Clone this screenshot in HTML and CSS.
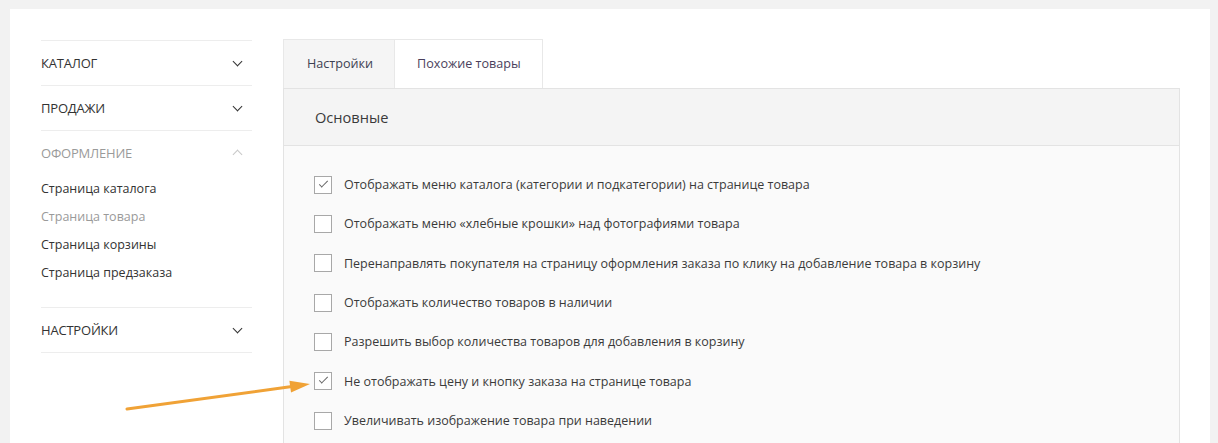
FILE: index.html
```html
<!DOCTYPE html>
<html lang="ru">
	<head>
		<meta charset="UTF-8" />
		<title>Оформление — Страница товара</title>
		<link rel="stylesheet" href="styles.css">
	</head>
	<body>
		<div class="page-card">
			<!-- Sidebar menu -->
			<nav class="side-menu">
				<div class="menu-section">
					<div class="menu-title">КАТАЛОГ <span class="chevron down"></span></div>
				</div>
				<div class="menu-section">
					<div class="menu-title">ПРОДАЖИ <span class="chevron down"></span></div>
				</div>
				<div class="menu-section open">
					<div class="menu-title muted">ОФОРМЛЕНИЕ <span class="chevron up"></span></div>
					<ul class="menu-sub">
						<li>Страница каталога</li>
						<li class="current">Страница товара</li>
						<li>Страница корзины</li>
						<li>Страница предзаказа</li>
					</ul>
				</div>
				<div class="menu-section">
					<div class="menu-title">НАСТРОЙКИ <span class="chevron down"></span></div>
				</div>
			</nav>

			<!-- Main settings -->
			<main class="settings">
				<div class="tabs">
					<div class="tab active">Настройки</div>
					<div class="tab">Похожие товары</div>
				</div>
				<div class="panel">
					<div class="panel-header">Основные</div>
					<div class="panel-body">
						<label class="option"><span class="check checked"></span>Отображать меню каталога (категории и подкатегории) на странице товара</label>
						<label class="option"><span class="check"></span>Отображать меню «хлебные крошки» над фотографиями товара</label>
						<label class="option"><span class="check"></span>Перенаправлять покупателя на страницу оформления заказа по клику на добавление товара в корзину</label>
						<label class="option"><span class="check"></span>Отображать количество товаров в наличии</label>
						<label class="option"><span class="check"></span>Разрешить выбор количества товаров для добавления в корзину</label>
						<label class="option"><span class="check checked"></span>Не отображать цену и кнопку заказа на странице товара</label>
						<label class="option"><span class="check"></span>Увеличивать изображение товара при наведении</label>
					</div>
				</div>
			</main>

			<!-- Annotation arrow -->
			<svg class="hint-arrow" width="200" height="50" viewBox="0 0 200 50">
				<line x1="7" y1="39" x2="172" y2="16.5" stroke="#f0a236" stroke-width="3" stroke-linecap="round" />
				<polygon points="190,14 171,22.6 169.4,10.8" fill="#f0a236" />
			</svg>
		</div>
	</body>
</html>
```

FILE: styles.css
```css
body {
	margin: 0;
	background-color: #f2f2f2;
	font-family: 'Open Sans', 'Noto Sans', sans-serif;
	color: #333;
	font-size: 12.5px;
	overflow: hidden;
}

.page-card {
	position: relative;
	display: flex;
	align-items: flex-start;
	gap: 31px;
	margin: 9px 8px 0 10px;
	padding: 31px 30px 0 31px;
	height: 403px;
	overflow: hidden;
	background-color: white;
}

/* Sidebar */
.side-menu {
	width: 211px;
	flex-shrink: 0;
	border-top: 1px solid #ededed;
}

.menu-section {
	border-bottom: 1px solid #ededed;
}

.menu-title {
	display: flex;
	justify-content: space-between;
	align-items: center;
	height: 44px;
	font-size: 13px;
	color: #333;
	letter-spacing: -0.2px;
}

.menu-title.muted {
	color: #9a9a9a;
}

.chevron {
	width: 6px;
	height: 6px;
	margin-right: 11px;
	border: solid #333;
	border-width: 0 1.3px 1.3px 0;
	transform: rotate(45deg);
	margin-top: -4px;
}

.chevron.up {
	border-color: #c8c8c8;
	transform: rotate(-135deg);
	margin-top: 2px;
}

.menu-sub {
	list-style: none;
	margin: 0;
	padding: 0 0 20px 0;
}

.menu-sub li {
	height: 28px;
	line-height: 28px;
	font-size: 12.5px;
	color: #333;
}

.menu-sub li.current {
	color: #9a9a9a;
}

/* Tabs and panel */
.settings {
	flex-grow: 1;
	margin-top: -1px;
}

.tabs {
	display: flex;
}

.tab {
	height: 48px;
	line-height: 48px;
	padding: 0 21px 0 23px;
	border: 1px solid #e8e8e8;
	border-bottom: none;
	color: #3d4152;
	font-size: 12.6px;
	background-color: white;
}

.tab + .tab {
	border-left: none;
	padding: 0 21px 0 22px;
	color: #4a3f5c;
}

.tab.active {
	background-color: #f5f5f5;
}

.panel {
	border: 1px solid #e3e3e3;
	background-color: #fafafa;
	height: 400px;
}

.panel-header {
	height: 56px;
	line-height: 56px;
	padding-left: 31px;
	font-size: 14.6px;
	color: #3a3a3a;
	background-color: #f4f4f4;
	border-bottom: 1px solid #e3e3e3;
}

.panel-body {
	padding: 19px 30px 0 30px;
}

.option {
	display: flex;
	align-items: center;
	height: 39.33px;
	font-size: 12.5px;
	color: #3a3a3a;
}

.check {
	position: relative;
	width: 16px;
	height: 16px;
	margin-right: 12px;
	border: 1px solid #a8a8a8;
	background-color: white;
	flex-shrink: 0;
}

.check.checked::after {
	content: '';
	position: absolute;
	top: 4px;
	left: 4px;
	width: 8px;
	height: 3px;
	border: solid #666;
	border-width: 0 0 1px 1px;
	transform: rotate(-45deg);
}

/* Annotation arrow */
.hint-arrow {
	position: absolute;
	left: 110px;
	top: 361px;
}
```
